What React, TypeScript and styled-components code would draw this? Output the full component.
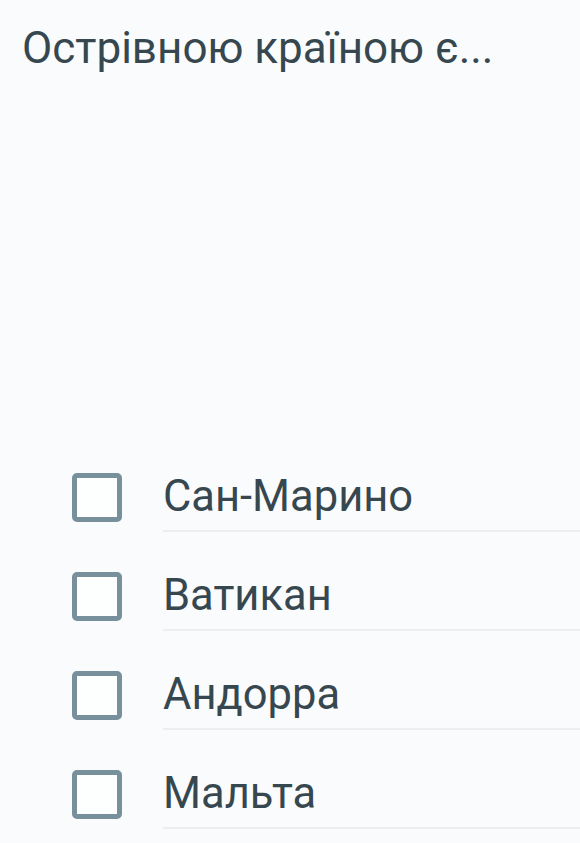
import React from "react";
import styled, { createGlobalStyle } from "styled-components";

const Global = createGlobalStyle`
  html, body { margin: 0; padding: 0; background: #f9fbfc; }
  body { font-family: Roboto, "Noto Sans", sans-serif; }
`;

const Page = styled.div`
  width: 580px;
  height: 843px;
  background: #f9fbfc;
  overflow: hidden;
  display: flex;
  flex-direction: column;
`;

const Question = styled.h1`
  margin: 0;
  padding: 22px 0 0 22px;
  font-size: 44px;
  font-weight: 400;
  line-height: 52px;
  color: #37474f;
`;

const List = styled.div`
  margin-top: 359px;
  display: flex;
  flex-direction: column;
`;

const Row = styled.label`
  display: flex;
  align-items: flex-start;
  padding: 40px 0 0 72px;
  height: 99px;
  box-sizing: border-box;
`;

const Box = styled.span`
  width: 50px;
  height: 49px;
  box-sizing: border-box;
  border: 5px solid #78909c;
  border-radius: 5px;
  background: #fdfefe;
  flex-shrink: 0;
`;

const Label = styled.span`
  margin-left: 41px;
  flex: 1;
  height: 59px;
  box-sizing: border-box;
  padding-bottom: 10px;
  display: flex;
  align-items: center;
  border-bottom: 2px solid #eceff1;
  font-size: 43.5px;
  color: #37474f;
`;

const options = ["Сан-Марино", "Ватикан", "Андорра", "Мальта"];

export default function App() {
  return (
    <Page>
      <Global />
      <Question>Острівною країною є...</Question>
      <List>
        {options.map((o) => (
          <Row key={o}>
            <Box />
            <Label>{o}</Label>
          </Row>
        ))}
      </List>
    </Page>
  );
}
